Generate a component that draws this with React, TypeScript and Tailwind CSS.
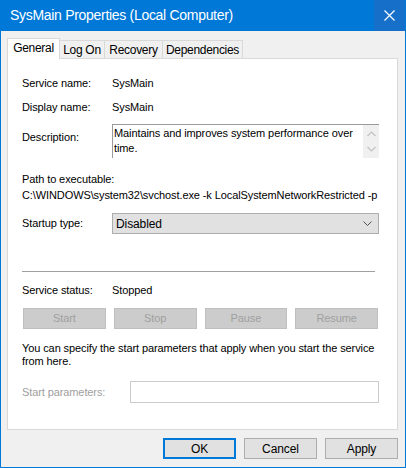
const font = { fontFamily: '"Liberation Sans", Arial, sans-serif' }

const Tab = ({ label, w, active }: { label: string; w: string; active?: boolean }) => (
  <div
    className={
      active
        ? `${w} h-[21px] -mb-px relative z-10 bg-white border border-b-0 border-[#d9d9d9] flex items-center justify-center pb-[2px]`
        : `${w} h-[18px] bg-[#f0f0f0] border border-b-0 border-l-0 border-[#d9d9d9] flex items-center justify-center`
    }
  >
    {label}
  </div>
)

const DisabledButton = ({ label }: { label: string }) => (
  <div className="h-[21px] bg-[#cccccc] border border-[#bfbfbf] text-[#a0a0a0] flex items-center justify-center">
    {label}
  </div>
)

export default function App() {
  return (
    <div
      className="w-[406px] h-[468px] border border-t-0 border-[#0078d7] bg-[#f0f0f0] flex flex-col text-[11px] tracking-[-0.1px] text-black"
      style={font}
    >
      {/* title bar */}
      <div className="h-[31px] bg-[#0078d7] flex items-center justify-between text-white -mx-px">
        <span className="pl-[10px] text-[14px] tracking-[-0.3px]">SysMain Properties (Local Computer)</span>
        <div className="w-[31px] h-full bg-[#1670c9] flex items-center justify-center mr-px">
          <svg width="11" height="11" viewBox="0 0 11 11" stroke="white" strokeWidth="1.2">
            <path d="M0.5 0.5 L10.5 10.5 M10.5 0.5 L0.5 10.5" />
          </svg>
        </div>
      </div>

      {/* tabs */}
      <div className="flex items-end ml-[6px] mt-[7px] text-[12px] tracking-[-0.3px]">
        <Tab label="General" w="w-[53px]" active />
        <Tab label="Log On" w="w-[45px]" />
        <Tab label="Recovery" w="w-[58px]" />
        <Tab label="Dependencies" w="w-[80px]" />
      </div>

      {/* panel */}
      <div className="ml-[6px] w-[391px] h-[372px] bg-white border border-[#d9d9d9] px-[14px] pt-[17px] flex flex-col">
        <div className="flex h-[15px] items-center">
          <span className="w-[90px]">Service name:</span>
          <span>SysMain</span>
        </div>
        <div className="flex h-[15px] items-center mt-[9px]">
          <span className="w-[90px]">Display name:</span>
          <span>SysMain</span>
        </div>
        <div className="flex mt-[9px]">
          <span className="w-[90px] pt-[5px]">Description:</span>
          <div className="w-[267px] h-[34px] border-t border-l border-[#9a9a9a] flex">
            <div className="flex-1 pl-[1px] pt-[1px] leading-[15px]">
              Maintains and improves system performance over time.
            </div>
            <div className="w-[16px] h-full bg-[#f0f0f0] flex flex-col items-center justify-around py-[2px]">
              <svg width="9" height="6" viewBox="0 0 9 6" fill="none" stroke="#c2c2c2" strokeWidth="1.2">
                <path d="M0.5 5 L4.5 1 L8.5 5" />
              </svg>
              <svg width="9" height="6" viewBox="0 0 9 6" fill="none" stroke="#c2c2c2" strokeWidth="1.2">
                <path d="M0.5 1 L4.5 5 L8.5 1" />
              </svg>
            </div>
          </div>
        </div>
        <div className="mt-[13px] leading-[16px]">
          <div>Path to executable:</div>
          <div className="whitespace-nowrap">C:\WINDOWS\system32\svchost.exe -k LocalSystemNetworkRestricted -p</div>
        </div>
        <div className="flex items-center mt-[10px]">
          <span className="w-[90px]">Startup type:</span>
          <div className="w-[267px] h-[21px] bg-[#e1e1e1] border border-[#adadad] flex items-center justify-between pl-[3px] pr-[6px] text-[12px]">
            <span>Disabled</span>
            <svg width="9" height="5" viewBox="0 0 9 5" fill="none" stroke="#505050" strokeWidth="1">
              <path d="M0.5 0.5 L4.5 4.5 L8.5 0.5" />
            </svg>
          </div>
        </div>
        <div className="mt-[37px] w-[353px] h-px bg-[#a0a0a0]" />
        <div className="flex h-[15px] items-center mt-[11px]">
          <span className="w-[90px]">Service status:</span>
          <span>Stopped</span>
        </div>
        <div className="grid grid-cols-4 gap-x-[8px] w-[355px] ml-px mt-[10px]">
          <DisabledButton label="Start" />
          <DisabledButton label="Stop" />
          <DisabledButton label="Pause" />
          <DisabledButton label="Resume" />
        </div>
        <p className="mt-[13px] leading-[13px] w-[355px]">
          You can specify the start parameters that apply when you start the service from here.
        </p>
        <div className="flex items-center mt-[13px]">
          <span className="w-[108px] text-[#a0a0a0]">Start parameters:</span>
          <div className="w-[249px] h-[22px] bg-white border border-[#cccccc]" />
        </div>
      </div>

      {/* bottom buttons */}
      <div className="flex justify-end gap-[8px] mt-[8px] mr-[7px] text-[12px]">
        <div className="w-[73px] h-[21px] bg-[#e1e1e1] border-2 border-[#0078d7] flex items-center justify-center">OK</div>
        <div className="w-[73px] h-[21px] bg-[#e1e1e1] border border-[#adadad] flex items-center justify-center">Cancel</div>
        <div className="w-[73px] h-[21px] bg-[#e1e1e1] border border-[#adadad] flex items-center justify-center">Apply</div>
      </div>
    </div>
  )
}
